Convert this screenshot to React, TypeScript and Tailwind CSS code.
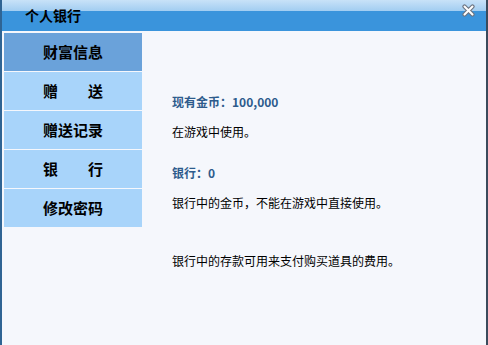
import React from 'react';

const menu = [
  { label: '财富信息', active: true },
  { label: '赠　　送' },
  { label: '赠送记录' },
  { label: '银　　行' },
  { label: '修改密码' },
];

export default function App() {
  return (
    <div
      className="w-[488px] h-[345px] flex flex-col bg-[#f5f7fc] border-l-2 border-l-[#2f6494] border-r-2 border-r-[#3a4a5c] overflow-hidden"
      style={{ fontFamily: '"Noto Sans CJK SC", "Noto Sans", sans-serif' }}
    >
      {/* Title bar */}
      <div className="h-[31px] shrink-0 flex flex-col relative">
        <div className="h-[11px] bg-gradient-to-b from-[#c8e2f8] to-[#a2cdf1]" />
        <div className="flex-1 bg-[#3a94dc]" />
        <span className="absolute left-[23px] top-[6px] text-[14px] leading-[18px] font-bold text-black">个人银行</span>
        <svg className="absolute right-[10px] top-[4px]" width="15" height="13" viewBox="0 0 15 13">
          <path d="M3.5 2.5 L11.5 10.5 M11.5 2.5 L3.5 10.5" stroke="#6b7380" strokeWidth="4.2" strokeLinecap="round" />
          <path d="M3.5 2.5 L11.5 10.5 M11.5 2.5 L3.5 10.5" stroke="#ffffff" strokeWidth="2" strokeLinecap="round" />
        </svg>
      </div>

      <div className="flex-1 flex">
        {/* Menu */}
        <div className="w-[140px] pl-[2px] pt-[2px] flex flex-col gap-px">
          {menu.map((m) => (
            <div
              key={m.label}
              className={`h-[38px] flex items-center justify-center text-[15px] font-bold text-black ${
                m.active ? 'bg-[#6aa2da]' : 'bg-[#a8d4fa]'
              }`}
            >
              {m.label}
            </div>
          ))}
        </div>

        {/* Content */}
        <div className="flex-1 pl-[30px] pt-[63px] text-[12px] leading-[16px] text-black">
          <div className="font-bold text-[#2d5b8c]">现有金币：100,000</div>
          <div className="mt-[14px]">在游戏中使用。</div>
          <div className="mt-[25px] font-bold text-[#2d5b8c]">银行：0</div>
          <div className="mt-[14px]">银行中的金币，不能在游戏中直接使用。</div>
          <div className="mt-[42px]">银行中的存款可用来支付购买道具的费用。</div>
        </div>
      </div>
    </div>
  );
}
